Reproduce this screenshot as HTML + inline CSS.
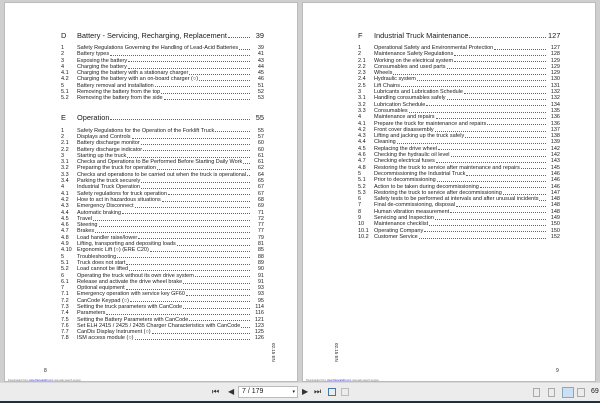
<!DOCTYPE html>
<html><head><meta charset="utf-8"><style>
*{margin:0;padding:0;box-sizing:border-box}
body{width:600px;height:403px;overflow:hidden;background:#cfcfcf;font-family:"Liberation Sans",sans-serif;position:relative;color:#1a1a1a}
.page{position:absolute;top:2px;height:380px;background:#fff;border:1px solid #bbb}
.toc{position:absolute;font-size:5.5px;line-height:6.3px}
.row{display:flex;height:6.3px;white-space:nowrap}
.n{width:16px;flex:none}
.t{flex:none}
.d{flex:1;border-bottom:0.6px dotted #666;margin:0 2px 1.6px 1px}
.p{flex:none;width:12px;text-align:right}
.h{font-size:7.4px;height:8px;line-height:8px;margin-bottom:5px}
.h .d{margin-bottom:2px}
.gap{height:11px}
.foot{position:absolute;font-size:2.6px;color:#777;top:376px;left:3px}
.foot u{color:#33c}
.rot{position:absolute;font-size:4.5px;transform:rotate(90deg);transform-origin:left top;white-space:nowrap}
.pn{position:absolute;font-size:5px;top:365px}
.bar{position:absolute;left:0;top:382px;width:600px;height:19px;background:#ececec;border-top:1px solid #d8d8d8}
.dark{position:absolute;left:0;top:401px;width:600px;height:2px;background:#22303e}
.ic{position:absolute;top:8px;font-size:6px;color:#333}
</style></head><body>
<div class="page" style="left:4px;width:294px">
<div class="toc" style="left:56px;top:29px;width:203px">
<div class="row h"><span class="n">D</span><span class="t">Battery - Servicing, Recharging, Replacement</span><span class="d"></span><span class="p">39</span></div>
<div class="row"><span class="n">1</span><span class="t">Safety Regulations Governing the Handling of Lead-Acid Batteries</span><span class="d"></span><span class="p">39</span></div>
<div class="row"><span class="n">2</span><span class="t">Battery types</span><span class="d"></span><span class="p">41</span></div>
<div class="row"><span class="n">3</span><span class="t">Exposing the battery</span><span class="d"></span><span class="p">43</span></div>
<div class="row"><span class="n">4</span><span class="t">Charging the battery</span><span class="d"></span><span class="p">44</span></div>
<div class="row"><span class="n">4.1</span><span class="t">Charging the battery with a stationary charger</span><span class="d"></span><span class="p">45</span></div>
<div class="row"><span class="n">4.2</span><span class="t">Charging the battery with an on-board charger (○)</span><span class="d"></span><span class="p">46</span></div>
<div class="row"><span class="n">5</span><span class="t">Battery removal and installation</span><span class="d"></span><span class="p">51</span></div>
<div class="row"><span class="n">5.1</span><span class="t">Removing the battery from the top</span><span class="d"></span><span class="p">52</span></div>
<div class="row"><span class="n">5.2</span><span class="t">Removing the battery from the side</span><span class="d"></span><span class="p">53</span></div>
<div class="gap" style="height:12px"></div>
<div class="row h" style="margin-bottom:6px"><span class="n">E</span><span class="t">Operation</span><span class="d"></span><span class="p">55</span></div>
<div class="row"><span class="n">1</span><span class="t">Safety Regulations for the Operation of the Forklift Truck</span><span class="d"></span><span class="p">55</span></div>
<div class="row"><span class="n">2</span><span class="t">Displays and Controls</span><span class="d"></span><span class="p">57</span></div>
<div class="row"><span class="n">2.1</span><span class="t">Battery discharge monitor</span><span class="d"></span><span class="p">60</span></div>
<div class="row"><span class="n">2.2</span><span class="t">Battery discharge indicator</span><span class="d"></span><span class="p">60</span></div>
<div class="row"><span class="n">3</span><span class="t">Starting up the truck</span><span class="d"></span><span class="p">61</span></div>
<div class="row"><span class="n">3.1</span><span class="t">Checks and Operations to Be Performed Before Starting Daily Work</span><span class="d"></span><span class="p">61</span></div>
<div class="row"><span class="n">3.2</span><span class="t">Preparing the truck for operation</span><span class="d"></span><span class="p">62</span></div>
<div class="row"><span class="n">3.3</span><span class="t">Checks and operations to be carried out when the truck is operational</span><span class="d"></span><span class="p">64</span></div>
<div class="row"><span class="n">3.4</span><span class="t">Parking the truck securely</span><span class="d"></span><span class="p">65</span></div>
<div class="row"><span class="n">4</span><span class="t">Industrial Truck Operation</span><span class="d"></span><span class="p">67</span></div>
<div class="row"><span class="n">4.1</span><span class="t">Safety regulations for truck operation</span><span class="d"></span><span class="p">67</span></div>
<div class="row"><span class="n">4.2</span><span class="t">How to act in hazardous situations</span><span class="d"></span><span class="p">68</span></div>
<div class="row"><span class="n">4.3</span><span class="t">Emergency Disconnect</span><span class="d"></span><span class="p">69</span></div>
<div class="row"><span class="n">4.4</span><span class="t">Automatic braking</span><span class="d"></span><span class="p">71</span></div>
<div class="row"><span class="n">4.5</span><span class="t">Travel</span><span class="d"></span><span class="p">72</span></div>
<div class="row"><span class="n">4.6</span><span class="t">Steering</span><span class="d"></span><span class="p">77</span></div>
<div class="row"><span class="n">4.7</span><span class="t">Brakes</span><span class="d"></span><span class="p">77</span></div>
<div class="row"><span class="n">4.8</span><span class="t">Load handler raise/lower</span><span class="d"></span><span class="p">79</span></div>
<div class="row"><span class="n">4.9</span><span class="t">Lifting, transporting and depositing loads</span><span class="d"></span><span class="p">81</span></div>
<div class="row"><span class="n">4.10</span><span class="t">Ergonomic Lift (○) (ERE C20)</span><span class="d"></span><span class="p">85</span></div>
<div class="row"><span class="n">5</span><span class="t">Troubleshooting</span><span class="d"></span><span class="p">88</span></div>
<div class="row"><span class="n">5.1</span><span class="t">Truck does not start</span><span class="d"></span><span class="p">89</span></div>
<div class="row"><span class="n">5.2</span><span class="t">Load cannot be lifted</span><span class="d"></span><span class="p">90</span></div>
<div class="row"><span class="n">6</span><span class="t">Operating the truck without its own drive system</span><span class="d"></span><span class="p">91</span></div>
<div class="row"><span class="n">6.1</span><span class="t">Release and activate the drive wheel brake</span><span class="d"></span><span class="p">91</span></div>
<div class="row"><span class="n">7</span><span class="t">Optional equipment</span><span class="d"></span><span class="p">93</span></div>
<div class="row"><span class="n">7.1</span><span class="t">Emergency operation with service key GF60</span><span class="d"></span><span class="p">93</span></div>
<div class="row"><span class="n">7.2</span><span class="t">CanCode Keypad (○)</span><span class="d"></span><span class="p">95</span></div>
<div class="row"><span class="n">7.3</span><span class="t">Setting the truck parameters with CanCode</span><span class="d"></span><span class="p">114</span></div>
<div class="row"><span class="n">7.4</span><span class="t">Parameters</span><span class="d"></span><span class="p">116</span></div>
<div class="row"><span class="n">7.5</span><span class="t">Setting the Battery Parameters with CanCode</span><span class="d"></span><span class="p">121</span></div>
<div class="row"><span class="n">7.6</span><span class="t">Set ELH 2415 / 2425 / 2435 Charger Characteristics with CanCode</span><span class="d"></span><span class="p">123</span></div>
<div class="row"><span class="n">7.7</span><span class="t">CanDis Display Instrument (○)</span><span class="d"></span><span class="p">125</span></div>
<div class="row"><span class="n">7.8</span><span class="t">ISM access module (○)</span><span class="d"></span><span class="p">126</span></div>
</div>
<div class="rot" style="left:271px;top:340px">02.15 EN</div>
<div class="pn" style="left:39px">8</div>
<div class="foot">Downloaded from <u>www.Manualslib.com</u> manuals search engine</div>
</div>

<div class="page" style="left:302px;width:294px">
<div class="toc" style="left:55px;top:29px;width:202px">
<div class="row h"><span class="n">F</span><span class="t">Industrial Truck Maintenance</span><span class="d"></span><span class="p">127</span></div>
<div class="row"><span class="n">1</span><span class="t">Operational Safety and Environmental Protection</span><span class="d"></span><span class="p">127</span></div>
<div class="row"><span class="n">2</span><span class="t">Maintenance Safety Regulations</span><span class="d"></span><span class="p">128</span></div>
<div class="row"><span class="n">2.1</span><span class="t">Working on the electrical system</span><span class="d"></span><span class="p">129</span></div>
<div class="row"><span class="n">2.2</span><span class="t">Consumables and used parts</span><span class="d"></span><span class="p">129</span></div>
<div class="row"><span class="n">2.3</span><span class="t">Wheels</span><span class="d"></span><span class="p">129</span></div>
<div class="row"><span class="n">2.4</span><span class="t">Hydraulic system</span><span class="d"></span><span class="p">130</span></div>
<div class="row"><span class="n">2.5</span><span class="t">Lift Chains</span><span class="d"></span><span class="p">131</span></div>
<div class="row"><span class="n">3</span><span class="t">Lubricants and Lubrication Schedule</span><span class="d"></span><span class="p">132</span></div>
<div class="row"><span class="n">3.1</span><span class="t">Handling consumables safely</span><span class="d"></span><span class="p">132</span></div>
<div class="row"><span class="n">3.2</span><span class="t">Lubrication Schedule</span><span class="d"></span><span class="p">134</span></div>
<div class="row"><span class="n">3.3</span><span class="t">Consumables</span><span class="d"></span><span class="p">135</span></div>
<div class="row"><span class="n">4</span><span class="t">Maintenance and repairs</span><span class="d"></span><span class="p">136</span></div>
<div class="row"><span class="n">4.1</span><span class="t">Prepare the truck for maintenance and repairs</span><span class="d"></span><span class="p">136</span></div>
<div class="row"><span class="n">4.2</span><span class="t">Front cover disassembly</span><span class="d"></span><span class="p">137</span></div>
<div class="row"><span class="n">4.3</span><span class="t">Lifting and jacking up the truck safely</span><span class="d"></span><span class="p">138</span></div>
<div class="row"><span class="n">4.4</span><span class="t">Cleaning</span><span class="d"></span><span class="p">139</span></div>
<div class="row"><span class="n">4.5</span><span class="t">Replacing the drive wheel</span><span class="d"></span><span class="p">142</span></div>
<div class="row"><span class="n">4.6</span><span class="t">Checking the hydraulic oil level</span><span class="d"></span><span class="p">142</span></div>
<div class="row"><span class="n">4.7</span><span class="t">Checking electrical fuses</span><span class="d"></span><span class="p">143</span></div>
<div class="row"><span class="n">4.8</span><span class="t">Restoring the truck to service after maintenance and repairs</span><span class="d"></span><span class="p">145</span></div>
<div class="row"><span class="n">5</span><span class="t">Decommissioning the Industrial Truck</span><span class="d"></span><span class="p">146</span></div>
<div class="row"><span class="n">5.1</span><span class="t">Prior to decommissioning</span><span class="d"></span><span class="p">146</span></div>
<div class="row"><span class="n">5.2</span><span class="t">Action to be taken during decommissioning</span><span class="d"></span><span class="p">146</span></div>
<div class="row"><span class="n">5.3</span><span class="t">Restoring the truck to service after decommissioning</span><span class="d"></span><span class="p">147</span></div>
<div class="row"><span class="n">6</span><span class="t">Safety tests to be performed at intervals and after unusual incidents</span><span class="d"></span><span class="p">148</span></div>
<div class="row"><span class="n">7</span><span class="t">Final de-commissioning, disposal</span><span class="d"></span><span class="p">148</span></div>
<div class="row"><span class="n">8</span><span class="t">Human vibration measurement</span><span class="d"></span><span class="p">148</span></div>
<div class="row"><span class="n">9</span><span class="t">Servicing and Inspection</span><span class="d"></span><span class="p">149</span></div>
<div class="row"><span class="n">10</span><span class="t">Maintenance checklist</span><span class="d"></span><span class="p">150</span></div>
<div class="row"><span class="n">10.1</span><span class="t">Operating Company</span><span class="d"></span><span class="p">150</span></div>
<div class="row"><span class="n">10.2</span><span class="t">Customer Service</span><span class="d"></span><span class="p">152</span></div>
</div>
<div class="rot" style="left:36px;top:340px">02.15 EN</div>
<div class="pn" style="left:253px">9</div>
<div class="foot">Downloaded from <u>www.Manualslib.com</u> manuals search engine</div>
</div>

<div class="bar">
<span class="ic" style="left:212px;top:4px;font-size:8px">⏮</span>
<span class="ic" style="left:228px;top:4px;font-size:8px">◀</span>
<div style="position:absolute;left:238px;top:3px;width:60px;height:12px;background:#fff;border:1px solid #bbb;font-size:7px;line-height:10px;padding-left:3px">7 / 179<span style="position:absolute;right:2px;font-size:5px">▾</span></div>
<span class="ic" style="left:302px;top:4px;font-size:8px">▶</span>
<span class="ic" style="left:314px;top:4px;font-size:8px">⏭</span>
<div style="position:absolute;left:328px;top:5px;width:8px;height:8px;border:1px solid #47a"></div>
<div style="position:absolute;left:341px;top:5px;width:8px;height:8px;border:1px solid #bbb"></div>
<div style="position:absolute;left:533px;top:5px;width:7px;height:9px;border:1px solid #aaa"></div>
<div style="position:absolute;left:548px;top:5px;width:7px;height:9px;border:1px solid #aaa"></div>
<div style="position:absolute;left:562px;top:4px;width:12px;height:11px;background:#cde0f3;border:1px solid #8ab"></div>
<div style="position:absolute;left:577px;top:5px;width:8px;height:9px;border:1px solid #aaa"></div>
<span style="position:absolute;left:591px;top:5px;font-size:7px">69</span>
</div>
<div class="dark"></div>
</body></html>
